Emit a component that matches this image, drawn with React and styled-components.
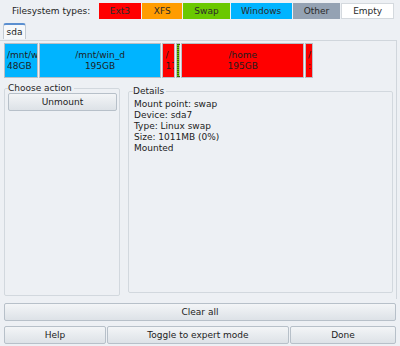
import React from 'react';
import styled, { createGlobalStyle } from 'styled-components';

const Global = createGlobalStyle`
    body {
        margin: 0;
        background: #edf0f4;
        font-family: "DejaVu Sans", sans-serif;
        font-size: 9px;
        color: #1c1c1c;
    }
`;

const Page = styled.div`
    width: 400px;
    height: 346px;
    display: flex;
    flex-direction: column;
    overflow: hidden;
`;

const LegendRow = styled.div`
    display: flex;
    align-items: center;
    height: 22px;
    padding: 0 5px 0 12px;
`;

const LegendLabel = styled.span`
    width: 87px;
    font-size: 9px;
`;

const LegendBox = styled.div`
    width: ${p => p.w}px;
    height: 16px;
    margin-right: 1px;
    background: ${p => p.bg};
    border: 1px solid ${p => p.bg === '#ffffff' ? '#d4d9de' : 'transparent'};
    box-sizing: border-box;
    display: flex;
    align-items: center;
    justify-content: center;
    font-size: 9px;
    color: #2a2a2a;
`;

const TabBar = styled.div`
    display: flex;
    padding: 1px 0 0 3px;
    height: 17px;
`;

const Tab = styled.div`
    width: 23px;
    height: 16px;
    box-sizing: border-box;
    border: 1px solid #c3cbd3;
    border-top: 2px solid #5b8fd0;
    border-bottom: none;
    border-radius: 3px 3px 0 0;
    background: #f6f8fa;
    display: flex;
    align-items: center;
    justify-content: center;
    font-size: 9px;
`;

const Panel = styled.div`
    margin: 0 3px 0 0;
    height: 256px;
    border-top: 1px solid #d0d6dc;
    border-right: 1px solid #d0d6dc;
    padding: 2px 0 0 4px;
    display: flex;
    flex-direction: column;
`;

const Disk = styled.div`
    display: flex;
    height: 35px;
    width: 309px;
    gap: 1px;
`;

const Part = styled.div`
    width: ${p => p.w}px;
    background: ${p => p.bg};
    border: 1px solid #b9bfc6;
    box-sizing: border-box;
    overflow: hidden;
    white-space: nowrap;
    display: flex;
    flex-direction: column;
    justify-content: center;
    align-items: ${p => p.center ? 'center' : 'flex-start'};
    font-size: 9px;
    line-height: 11px;
    color: #1e1e1e;
    padding-left: ${p => p.center ? 0 : 2}px;
    ${p => p.selected && 'outline: 1px dotted #3d6b00; outline-offset: -2px;'}
`;

const Body = styled.div`
    display: flex;
    gap: 8px;
    margin-top: 5px;
    flex: 1;
`;

const Frame = styled.fieldset`
    margin: ${p => p.top}px 0 ${p => p.bottom}px 0;
    padding: 0 ${p => p.pad}px;
    width: ${p => p.w}px;
    box-sizing: border-box;
    border: 1px solid #d2d8de;
    border-radius: 2px;
    min-width: 0;
`;

const Legend = styled.legend`
    padding: 0 2px 0 0;
    margin-left: ${p => p.ml || 0}px;
    font-size: 9px;
    color: #262626;
`;

const Button = styled.button`
    font-family: "DejaVu Sans", sans-serif;
    font-size: 9px;
    color: #222;
    height: ${p => p.h || 18}px;
    width: ${p => p.w ? p.w + 'px' : 'auto'};
    flex: ${p => p.w ? 'none' : 1};
    border: 1px solid #b7c0c9;
    border-radius: 2px;
    background: linear-gradient(#f3f5f7, #dde2e7);
    padding: 0;
`;

const DetailText = styled.div`
    padding: 3px 0 0 3px;
    font-size: 9px;
    line-height: 11px;
`;

const BottomRow = styled.div`
    display: flex;
    gap: 1px;
    padding: 0 4px;
    margin-top: ${p => p.mt}px;
`;

const legend = [
    { name: 'Ext3', bg: '#ff0000', w: 43 },
    { name: 'XFS', bg: '#ff9c00', w: 40 },
    { name: 'Swap', bg: '#6ac800', w: 47 },
    { name: 'Windows', bg: '#00b4ff', w: 61 },
    { name: 'Other', bg: '#94a2b3', w: 48 },
    { name: 'Empty', bg: '#ffffff', w: 53 },
];

const parts = [
    { w: 34, bg: '#00b4ff', l1: '/mnt/win_c', l2: '48GB' },
    { w: 124, bg: '#00b4ff', l1: '/mnt/win_d', l2: '195GB', center: true },
    { w: 13, bg: '#ff0000', l1: '/', l2: '17GB' },
    { w: 4, bg: '#6ac800', selected: true },
    { w: 124, bg: '#ff0000', l1: '/home', l2: '195GB', center: true },
    { w: 8, bg: '#ff0000', l1: '/', l2: ':' },
];

export default function App() {
    return (
        <Page>
            <Global />
            <LegendRow>
                <LegendLabel>Filesystem types:</LegendLabel>
                {legend.map(l => (
                    <LegendBox key={l.name} bg={l.bg} w={l.w}>{l.name}</LegendBox>
                ))}
            </LegendRow>
            <TabBar>
                <Tab>sda</Tab>
            </TabBar>
            <Panel>
                <Disk>
                    {parts.map((p, i) => (
                        <Part key={i} w={p.w} bg={p.bg} center={p.center} selected={p.selected}>
                            {p.l1 && <span>{p.l1}</span>}
                            {p.l2 && <span>{p.l2}</span>}
                        </Part>
                    ))}
                </Disk>
                <Body>
                    <Frame w={116} top={0} bottom={3} pad={3}>
                        <Legend>Choose action</Legend>
                        <Button w={109}>Unmount</Button>
                    </Frame>
                    <Frame w={265} top={3} bottom={6} pad={2}>
                        <Legend ml={2}>Details</Legend>
                        <DetailText>
                            Mount point: swap<br />
                            Device: sda7<br />
                            Type: Linux swap<br />
                            Size: 1011MB (0%)<br />
                            Mounted
                        </DetailText>
                    </Frame>
                </Body>
            </Panel>
            <BottomRow mt={4}>
                <Button>Clear all</Button>
            </BottomRow>
            <BottomRow mt={5}>
                <Button w={102}>Help</Button>
                <Button w={182}>Toggle to expert mode</Button>
                <Button>Done</Button>
            </BottomRow>
        </Page>
    );
}
